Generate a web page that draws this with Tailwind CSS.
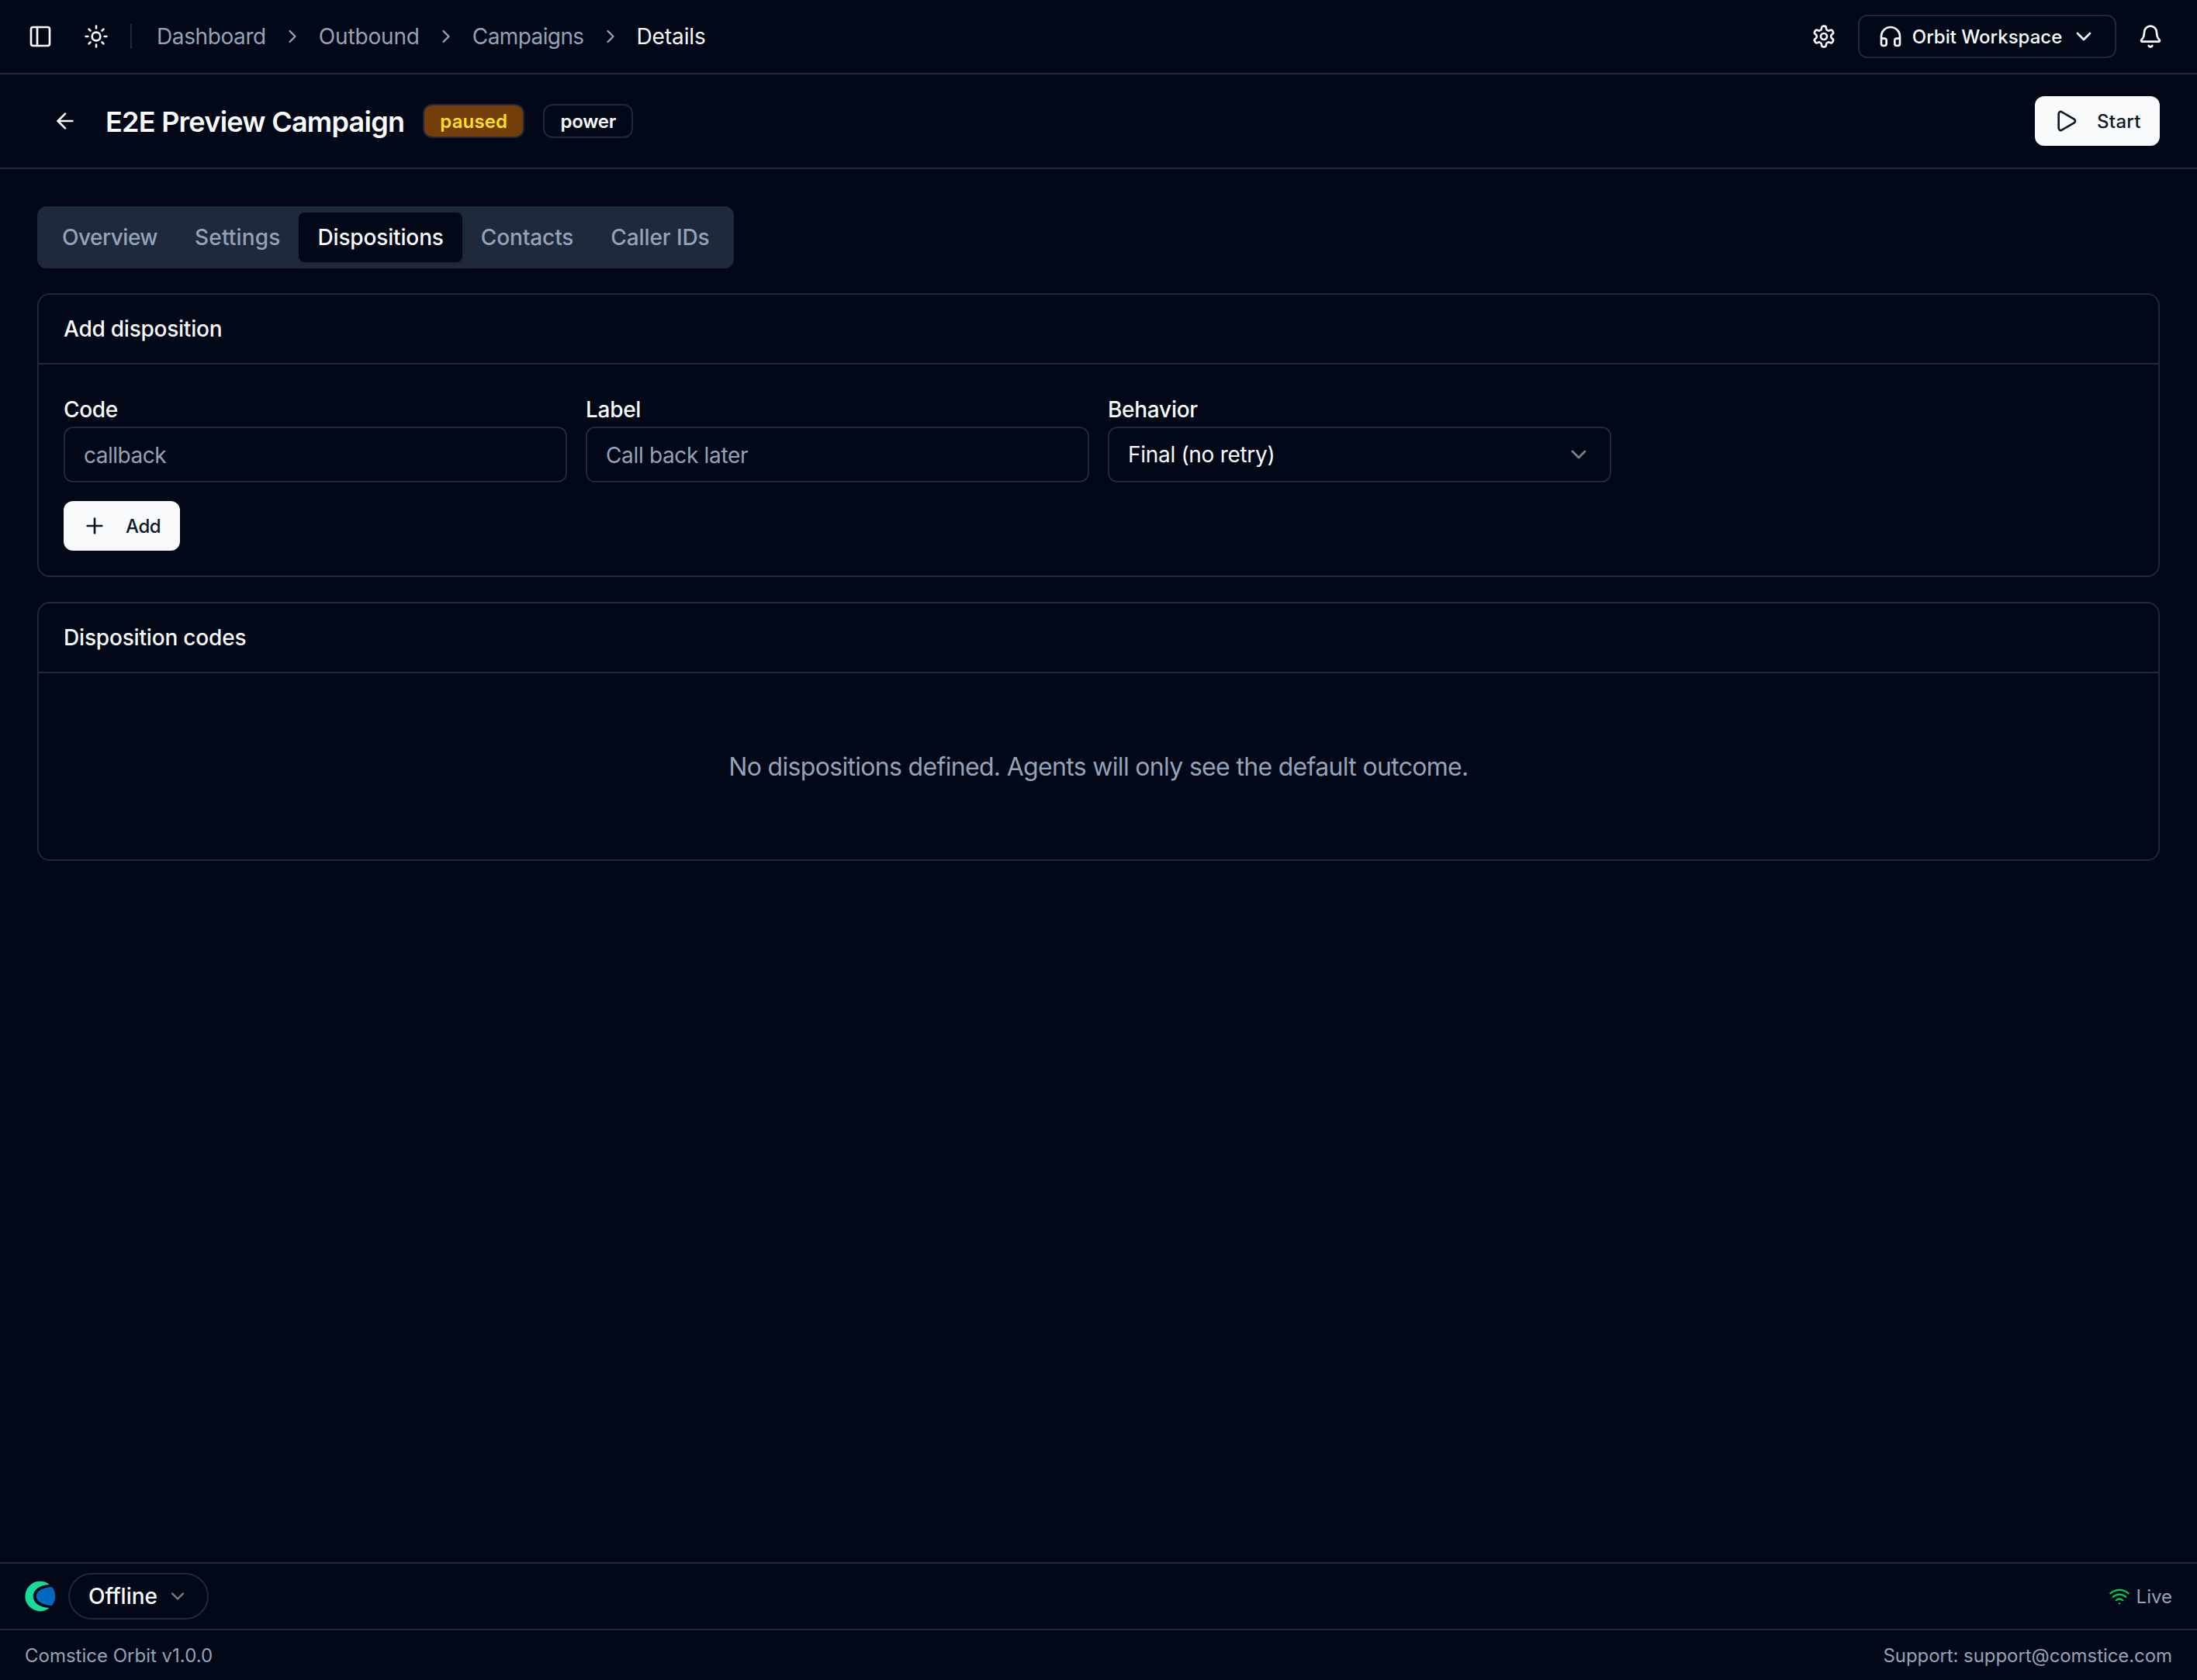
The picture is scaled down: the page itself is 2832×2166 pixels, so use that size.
<!DOCTYPE html>
<html lang="en">
<head>
  <meta charset="UTF-8">
  <title>Campaign Details</title>
  <script src="https://cdn.jsdelivr.net/npm/@tailwindcss/browser@4"></script>
</head>
<body class="bg-[#020817] text-[#f8fafc] font-['Inter',sans-serif]">
<div class="flex flex-col h-screen w-full overflow-hidden text-[28px] leading-10">

  <!-- Top bar -->
  <header class="flex items-center justify-between h-24 pl-9 pr-11 border-b-2 border-[#1e293b] shrink-0">
    <div class="flex items-center">
      <svg class="size-8" viewBox="0 0 24 24" fill="none" stroke="currentColor" stroke-width="2" stroke-linecap="round" stroke-linejoin="round"><rect width="18" height="18" x="3" y="3" rx="2"/><path d="M9 3v18"/></svg>
      <svg class="size-8 ml-10" viewBox="0 0 24 24" fill="none" stroke="currentColor" stroke-width="2" stroke-linecap="round" stroke-linejoin="round"><circle cx="12" cy="12" r="4"/><path d="M12 2v2"/><path d="M12 20v2"/><path d="m4.93 4.93 1.41 1.41"/><path d="m17.66 17.66 1.41 1.41"/><path d="M2 12h2"/><path d="M20 12h2"/><path d="m6.34 17.66-1.41 1.41"/><path d="m19.07 4.93-1.41 1.41"/></svg>
      <div class="w-0.5 h-8 ml-7 bg-[#1e293b]"></div>
      <nav class="flex items-center gap-5 ml-8 text-[#94a3b8]">
        <span class="tracking-[-0.4px]">Dashboard</span>
        <svg class="size-7" viewBox="0 0 24 24" fill="none" stroke="currentColor" stroke-width="2" stroke-linecap="round" stroke-linejoin="round"><path d="m9 18 6-6-6-6"/></svg>
        <span class="tracking-[-0.17px]">Outbound</span>
        <svg class="size-7" viewBox="0 0 24 24" fill="none" stroke="currentColor" stroke-width="2" stroke-linecap="round" stroke-linejoin="round"><path d="m9 18 6-6-6-6"/></svg>
        <span class="tracking-[-0.6px]">Campaigns</span>
        <svg class="size-7" viewBox="0 0 24 24" fill="none" stroke="currentColor" stroke-width="2" stroke-linecap="round" stroke-linejoin="round"><path d="m9 18 6-6-6-6"/></svg>
        <span class="text-[#f8fafc] tracking-[-0.1px]">Details</span>
      </nav>
    </div>
    <div class="flex items-center gap-7">
      <svg class="size-8" viewBox="0 0 24 24" fill="none" stroke="currentColor" stroke-width="2" stroke-linecap="round" stroke-linejoin="round"><path d="M12.22 2h-.44a2 2 0 0 0-2 2v.18a2 2 0 0 1-1 1.73l-.43.25a2 2 0 0 1-2 0l-.15-.08a2 2 0 0 0-2.73.73l-.22.38a2 2 0 0 0 .73 2.73l.15.1a2 2 0 0 1 1 1.72v.51a2 2 0 0 1-1 1.74l-.15.09a2 2 0 0 0-.73 2.73l.22.38a2 2 0 0 0 2.73.73l.15-.08a2 2 0 0 1 2 0l.43.25a2 2 0 0 1 1 1.73V20a2 2 0 0 0 2 2h.44a2 2 0 0 0 2-2v-.18a2 2 0 0 1 1-1.73l.43-.25a2 2 0 0 1 2 0l.15.08a2 2 0 0 0 2.73-.73l.22-.39a2 2 0 0 0-.73-2.73l-.15-.08a2 2 0 0 1-1-1.74v-.5a2 2 0 0 1 1-1.74l.15-.09a2 2 0 0 0 .73-2.73l-.22-.38a2 2 0 0 0-2.73-.73l-.15.08a2 2 0 0 1-2 0l-.43-.25a2 2 0 0 1-1-1.73V4a2 2 0 0 0-2-2z"/><circle cx="12" cy="12" r="3"/></svg>
      <button class="flex items-center justify-between w-[333px] h-14 px-6 border-2 border-[#1e293b] rounded-xl text-2xl font-medium">
        <svg class="size-8" viewBox="0 0 24 24" fill="none" stroke="currentColor" stroke-width="2" stroke-linecap="round" stroke-linejoin="round"><path d="M3 14h3a2 2 0 0 1 2 2v3a2 2 0 0 1-2 2H5a2 2 0 0 1-2-2v-7a9 9 0 0 1 18 0v7a2 2 0 0 1-2 2h-1a2 2 0 0 1-2-2v-3a2 2 0 0 1 2-2h3"/></svg>
        <span class="pt-0.5">Orbit Workspace</span>
        <svg class="size-8" viewBox="0 0 24 24" fill="none" stroke="currentColor" stroke-width="2" stroke-linecap="round" stroke-linejoin="round"><path d="m6 9 6 6 6-6"/></svg>
      </button>
      <svg class="size-8" viewBox="0 0 24 24" fill="none" stroke="currentColor" stroke-width="2" stroke-linecap="round" stroke-linejoin="round"><path d="M10.268 21a2 2 0 0 0 3.464 0"/><path d="M3.262 15.326A1 1 0 0 0 4 17h16a1 1 0 0 0 .74-1.673C19.41 13.956 18 12.499 18 8A6 6 0 0 0 6 8c0 4.499-1.411 5.956-2.738 7.326"/></svg>
    </div>
  </header>

  <!-- Campaign title -->
  <div class="flex items-center justify-between h-[122px] pl-[68px] pr-12 border-b-2 border-[#1e293b] shrink-0">
    <div class="flex items-center gap-6">
      <svg class="size-8 mr-3" viewBox="0 0 24 24" fill="none" stroke="currentColor" stroke-width="2" stroke-linecap="round" stroke-linejoin="round"><path d="m12 19-7-7 7-7"/><path d="M19 12H5"/></svg>
      <h1 class="pt-0.5 text-4xl font-semibold tracking-[-0.74px]">E2E Preview Campaign</h1>
      <span class="flex items-center justify-center w-[131px] h-11 pt-0.5 border-2 border-[#1e293b] rounded-xl bg-yellow-900 text-yellow-300 text-2xl font-semibold tracking-[0.15px]">paused</span>
      <span class="flex items-center justify-center w-[116px] h-11 pt-0.5 border-2 border-[#1e293b] rounded-xl text-2xl font-semibold tracking-[-0.2px]">power</span>
    </div>
    <button class="flex items-center gap-6 w-[161px] h-16 pl-6 rounded-xl bg-[#f8fafc] text-[#0f172a] text-2xl font-medium tracking-[0.3px]">
      <svg class="size-8" viewBox="0 0 24 24" fill="none" stroke="currentColor" stroke-width="2" stroke-linecap="round" stroke-linejoin="round"><path d="M5 5a2 2 0 0 1 3.008-1.728l11.997 6.998a2 2 0 0 1 .003 3.458l-12 7A2 2 0 0 1 5 19z"/></svg>
      <span class="pt-0.5">Start</span>
    </button>
  </div>

  <main class="flex-1 flex flex-col gap-8 p-12">
    <!-- Tabs -->
    <div class="flex items-center self-start w-[898px] h-20 p-2 rounded-xl bg-[#1e293b] text-[#94a3b8] font-medium whitespace-nowrap">
      <button class="px-6 h-16 tracking-[-0.5px]">Overview</button>
      <button class="px-6 h-16 tracking-[0.15px]">Settings</button>
      <button class="px-6 h-16 rounded-lg bg-[#020817] text-[#f8fafc] shadow-sm tracking-[-0.15px]">Dispositions</button>
      <button class="px-6 h-16 tracking-[-0.1px]">Contacts</button>
      <button class="px-6 h-16 tracking-[-0.1px]">Caller IDs</button>
    </div>

    <!-- Add disposition -->
    <section class="h-[366px] border-2 border-[#1e293b] rounded-2xl">
      <h2 class="flex items-center h-[90px] px-8 border-b-2 border-[#1e293b] font-medium tracking-[-0.24px]">Add disposition</h2>
      <div class="grid grid-cols-4 gap-x-6 px-8 pt-9">
        <div>
          <label class="flex items-center h-11 font-medium tracking-[-0.35px]">Code</label>
          <input type="text" placeholder="callback" class="block w-full h-[72px] px-6 pt-0.5 border-2 border-[#1e293b] rounded-xl tracking-[-0.5px] placeholder:text-[#94a3b8]">
        </div>
        <div>
          <label class="flex items-center h-11 font-medium tracking-[-0.3px]">Label</label>
          <input type="text" placeholder="Call back later" class="block w-full h-[72px] px-6 pt-0.5 border-2 border-[#1e293b] rounded-xl tracking-[-0.34px] placeholder:text-[#94a3b8]">
        </div>
        <div>
          <label class="flex items-center h-11 font-medium tracking-[-0.27px]">Behavior</label>
          <button class="flex items-center justify-between w-full h-[72px] px-6 border-2 border-[#1e293b] rounded-xl tracking-[-0.3px]">
            <span>Final (no retry)</span>
            <svg class="size-8 opacity-50" viewBox="0 0 24 24" fill="none" stroke="currentColor" stroke-width="2" stroke-linecap="round" stroke-linejoin="round"><path d="m6 9 6 6 6-6"/></svg>
          </button>
        </div>
      </div>
      <button class="flex items-center gap-6 w-[150px] h-16 mt-6 ml-8 pl-6 rounded-xl bg-[#f8fafc] text-[#0f172a] text-2xl font-medium tracking-[-0.4px]">
        <svg class="size-8" viewBox="0 0 24 24" fill="none" stroke="currentColor" stroke-width="2" stroke-linecap="round" stroke-linejoin="round"><path d="M5 12h14"/><path d="M12 5v14"/></svg>
        <span class="pt-0.5">Add</span>
      </button>
    </section>

    <!-- Disposition codes -->
    <section class="flex flex-col h-[334px] border-2 border-[#1e293b] rounded-2xl">
      <h2 class="flex items-center h-[90px] px-8 border-b-2 border-[#1e293b] font-medium tracking-[-0.18px]">Disposition codes</h2>
      <p class="flex-1 flex items-center justify-center pt-0.5 text-[32px] tracking-[-0.68px] text-[#94a3b8]">No dispositions defined. Agents will only see the default outcome.</p>
    </section>
  </main>

  <!-- Agent status bar -->
  <div class="flex items-center justify-between h-[86px] px-8 border-t-2 border-[#1e293b] shrink-0">
    <div class="flex items-center gap-4">
      <svg class="size-10" viewBox="0 0 40 40">
        <path fill="#19db98" d="M31.7 4.9A19.3 19.3 0 1 0 31.7 35.1C18 34.5 10.7 27.5 10.7 20S18 5.6 31.7 4.9Z"/>
        <path fill="#0369bf" d="M34.9 7.9C22 8.5 14.7 13.5 14.7 20S22 31.5 34.9 32.1A19.3 19.3 0 0 0 34.9 7.9Z"/>
      </svg>
      <button class="flex items-center justify-between w-[181px] h-[60px] px-6 border-2 border-[#1e293b] rounded-full font-medium">
        <span>Offline</span>
        <svg class="size-7 opacity-50" viewBox="0 0 24 24" fill="none" stroke="currentColor" stroke-width="2" stroke-linecap="round" stroke-linejoin="round"><path d="m6 9 6 6 6-6"/></svg>
      </button>
    </div>
    <div class="flex items-center gap-2 text-2xl text-[#94a3b8]">
      <svg class="size-7 text-green-500" viewBox="0 0 24 24" fill="none" stroke="currentColor" stroke-width="2" stroke-linecap="round" stroke-linejoin="round"><path d="M12 20h.01"/><path d="M2 8.82a15 15 0 0 1 20 0"/><path d="M5 12.859a10 10 0 0 1 14 0"/><path d="M8.5 16.429a5 5 0 0 1 7 0"/></svg>
      <span class="pt-0.5">Live</span>
    </div>
  </div>

  <footer class="flex items-center justify-between h-[66px] px-8 pt-0.5 border-t-2 border-[#1e293b] text-2xl text-[#94a3b8] shrink-0">
    <span>Comstice Orbit v1.0.0</span>
    <span class="tracking-[-0.07px]">Support: support@comstice.com</span>
  </footer>
</div>
</body>
</html>
